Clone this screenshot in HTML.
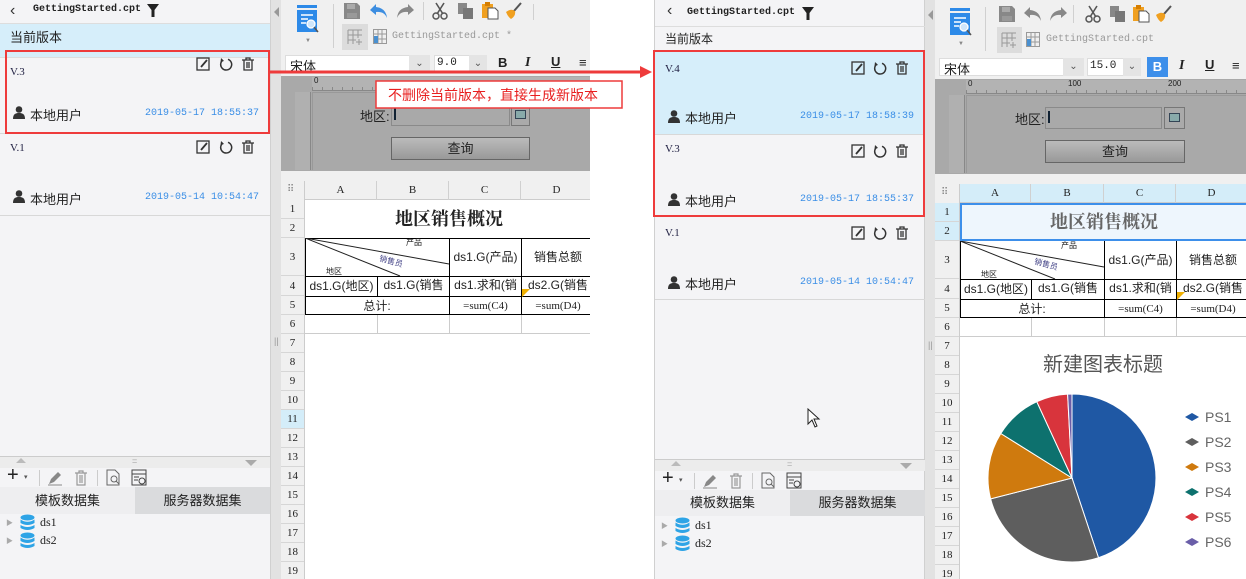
<!DOCTYPE html>
<html><head><meta charset="utf-8">
<style>
*{margin:0;padding:0;box-sizing:border-box}
body{width:1246px;height:579px;overflow:hidden;background:#fff;position:relative;font-family:"Liberation Sans","Noto Sans CJK SC",sans-serif;font-size:12px;color:#222;white-space:nowrap}
.a{position:absolute}
.mono{font-family:"Liberation Mono","Noto Sans CJK SC",monospace}
.serif{font-family:"Liberation Serif","Noto Serif CJK SC",serif}
.vp{position:absolute;top:0;width:271px;height:579px;background:#f4f4f6;border-right:1px solid #d0d0d0}
.item{position:absolute;left:0;width:270px;border-bottom:1px solid #d8d8d8}
.vt{position:absolute;left:10px;top:8px;font-family:"Liberation Serif",serif;font-size:11px;color:#224}
.usr{position:absolute;left:12px;font-size:13px;color:#222}
.dt{position:absolute;font-family:"Liberation Mono",monospace;font-size:10px;color:#3a8ee6;white-space:nowrap}
.ic{position:absolute;width:14px;height:14px}
.rn{position:absolute;width:100%;text-align:center;font-family:"Liberation Serif",serif;font-size:11px;color:#222;border-bottom:1px solid #d6d6d6}
.hc{position:absolute;top:0;height:19px;text-align:center;font-family:"Liberation Serif",serif;font-size:11px;line-height:19px;border-right:1px solid #d0d0d0}
.cell{position:absolute;text-align:center;white-space:nowrap;overflow:hidden;font-size:12px}
</style></head><body>

<!-- ============ LEFT VERSION PANEL ============ -->
<div class="vp" style="left:0">
  <div class="a" style="left:10px;top:2px;font-size:16px;color:#333">&#8249;</div>
  <div class="a mono" style="left:33px;top:4px;font-size:10px;font-weight:bold;color:#222">GettingStarted.cpt</div>
  <svg class="a" style="left:147px;top:4px" width="12" height="13"><path d="M0 0H12L7.5 6V13H4.5V6Z" fill="#222"/></svg>
  <div class="a" style="left:0;top:23px;width:270px;height:35px;background:#d6eefa;border-top:1px solid #ddd;border-bottom:1px solid #ddd"></div>
  <div class="a" style="left:10px;top:27px;font-size:13px">当前版本</div>

  <div class="item" style="top:58px;height:76px">
    <div class="vt">V.3</div>
    <svg class="ic" style="left:196px;top:-1px" viewBox="0 0 14 14"><rect x="1" y="1" width="12" height="12" fill="none" stroke="#333" stroke-width="1.3"/><path d="M5 10L11 3" stroke="#333" stroke-width="1.8"/></svg>
    <svg class="ic" style="left:219px;top:-1px" viewBox="0 0 14 14"><path d="M4 3A5.5 5.5 0 1 0 9 2.3" fill="none" stroke="#333" stroke-width="1.5"/><path d="M2 1L5 4L1.5 5Z" fill="#333"/></svg>
    <svg class="ic" style="left:241px;top:-1px" viewBox="0 0 14 14"><path d="M1 3H13M5 3V1H9V3M3 3V13H11V3M6 5V11M8 5V11" fill="none" stroke="#333" stroke-width="1.3"/></svg>
    <svg class="a" style="left:13px;top:48px" width="12" height="13"><circle cx="6" cy="3.5" r="3.3" fill="#333"/><path d="M0 13C0 8 2.5 7 6 7S12 8 12 13Z" fill="#333"/></svg>
    <div class="usr" style="top:47px;left:30px">本地用户</div>
    <div class="dt" style="left:145px;top:50px">2019-05-17 18:55:37</div>
  </div>
  <div class="item" style="top:134px;height:82px">
    <div class="vt">V.1</div>
    <svg class="ic" style="left:196px;top:6px" viewBox="0 0 14 14"><rect x="1" y="1" width="12" height="12" fill="none" stroke="#333" stroke-width="1.3"/><path d="M5 10L11 3" stroke="#333" stroke-width="1.8"/></svg>
    <svg class="ic" style="left:219px;top:6px" viewBox="0 0 14 14"><path d="M4 3A5.5 5.5 0 1 0 9 2.3" fill="none" stroke="#333" stroke-width="1.5"/><path d="M2 1L5 4L1.5 5Z" fill="#333"/></svg>
    <svg class="ic" style="left:241px;top:6px" viewBox="0 0 14 14"><path d="M1 3H13M5 3V1H9V3M3 3V13H11V3M6 5V11M8 5V11" fill="none" stroke="#333" stroke-width="1.3"/></svg>
    <svg class="a" style="left:13px;top:56px" width="12" height="13"><circle cx="6" cy="3.5" r="3.3" fill="#333"/><path d="M0 13C0 8 2.5 7 6 7S12 8 12 13Z" fill="#333"/></svg>
    <div class="usr" style="top:55px;left:30px">本地用户</div>
    <div class="dt" style="left:145px;top:58px">2019-05-14 10:54:47</div>
  </div>
  <div class="a" style="left:0;top:456px;width:270px;height:12px;background:#ececec;border-top:1px solid #ccc"></div>
  <div class="a" style="left:16px;top:458px;border:5px solid transparent;border-bottom-color:#bbb;border-top:0"></div>
  <div class="a" style="left:245px;top:460px;border:6px solid transparent;border-top-color:#aaa;border-bottom:0"></div>
  <div class="a" style="left:132px;top:456px;font-size:9px;color:#aaa">=</div>
  <div class="a" style="left:0;top:468px;width:270px;height:20px;background:#f4f4f6"></div>
  <div class="a" style="left:7px;top:464px;font-size:20px;color:#222">+</div><div class="a" style="left:24px;top:473px;font-size:7px;color:#555">▾</div>
  <div class="a" style="left:39px;top:470px;width:1px;height:16px;background:#ccc"></div>
  <svg class="a" style="left:47px;top:470px" width="16" height="16"><path d="M2 14L4 9L11 2L14 5L7 12Z" fill="#888"/><path d="M1 15H15" stroke="#888"/></svg>
  <svg class="a" style="left:74px;top:470px" width="14" height="16"><path d="M1 3H13M5 3V1H9V3M3 3V15H11V3M6 5V13M8 5V13" fill="none" stroke="#999" stroke-width="1.2"/></svg>
  <div class="a" style="left:97px;top:470px;width:1px;height:16px;background:#ccc"></div>
  <svg class="a" style="left:106px;top:469px" width="14" height="17"><path d="M1 1H9L13 5V16H1Z" fill="none" stroke="#666"/><circle cx="8" cy="10" r="3" fill="none" stroke="#666"/><path d="M10 12L13 15" stroke="#666"/></svg>
  <svg class="a" style="left:131px;top:469px" width="16" height="17"><rect x="1" y="1" width="14" height="15" fill="none" stroke="#444"/><path d="M1 5H15M3 8H8M3 11H7" stroke="#444"/><circle cx="11" cy="12" r="3" fill="none" stroke="#444"/></svg>
  <div class="a" style="left:0;top:487px;width:135px;height:27px;background:#eeeef0;text-align:center;line-height:27px;font-size:13px">模板数据集</div>
  <div class="a" style="left:135px;top:487px;width:135px;height:27px;background:#dadbdd;text-align:center;line-height:27px;font-size:13px">服务器数据集</div>
  <div class="a" style="left:6px;top:518px;font-size:7px;color:#aaa">▶</div>
  <div class="a" style="left:6px;top:536px;font-size:7px;color:#aaa">▶</div>
  <svg class="a" style="left:20px;top:514px" width="15" height="17"><ellipse cx="7.5" cy="3.5" rx="7" ry="3" fill="#2ea4e6"/><path d="M0.5 5.5Q7.5 10 14.5 5.5V9Q7.5 13 0.5 9Z M0.5 11Q7.5 15 14.5 11V14Q7.5 18 0.5 14Z" fill="#2ea4e6"/></svg>
  <svg class="a" style="left:20px;top:532px" width="15" height="17"><ellipse cx="7.5" cy="3.5" rx="7" ry="3" fill="#2ea4e6"/><path d="M0.5 5.5Q7.5 10 14.5 5.5V9Q7.5 13 0.5 9Z M0.5 11Q7.5 15 14.5 11V14Q7.5 18 0.5 14Z" fill="#2ea4e6"/></svg>
  <div class="a serif" style="left:40px;top:515px;font-size:12px">ds1</div>
  <div class="a serif" style="left:40px;top:533px;font-size:12px">ds2</div>
</div>

<!-- ============ LEFT DESIGNER ============ -->
<div class="a" style="left:271px;top:0;width:319px;height:579px;background:#f0f0f0;overflow:hidden">
  <div class="a" style="left:0;top:0;width:10px;height:579px;background:#e2e2e2"></div>
  <div class="a" style="left:3px;top:7px;border:5px solid transparent;border-right-color:#999;border-left:0;height:0"></div>
  <div class="a" style="left:3px;top:336px;font-size:9px;color:#999">||</div>
  <svg class="a" style="left:25px;top:5px" width="24" height="30"><rect x="1" y="0" width="20" height="3" fill="#2d8ae8"/><path d="M1 5H21V27H1Z" fill="#2d8ae8"/><path d="M5 10H17M5 14H12M5 18H10" stroke="#fff" stroke-width="1.5"/><circle cx="15" cy="19" r="4" fill="#cfe6fb" stroke="#fff" stroke-width="1.3"/><path d="M18 22L22 27" stroke="#555" stroke-width="1.5"/></svg>
  <div class="a" style="left:34px;top:38px;font-size:6px;color:#888">▼</div>
  <div class="a" style="left:62px;top:4px;width:1px;height:44px;background:#d0d0d0"></div>
  <svg class="a" style="left:72px;top:2px" width="18" height="18"><path d="M1 1H14L17 4V17H1Z" fill="#888"/><rect x="4" y="2" width="8" height="5" fill="#aaa"/><rect x="4" y="11" width="10" height="5" fill="#999"/></svg>
  <svg class="a" style="left:98px;top:3px" width="20" height="16"><path d="M7 1L1 7L7 12V9Q15 8 18 15Q17 5 7 4Z" fill="#3c8de0"/></svg>
  <svg class="a" style="left:124px;top:3px" width="20" height="16"><path d="M13 1L19 7L13 12V9Q5 8 2 15Q3 5 13 4Z" fill="#888"/></svg>
  <div class="a" style="left:152px;top:2px;width:1px;height:18px;background:#d0d0d0"></div>
  <svg class="a" style="left:160px;top:2px" width="18" height="18"><path d="M5 1L12 12M13 1L6 12" stroke="#555" stroke-width="1.6"/><circle cx="5" cy="14" r="3" fill="none" stroke="#555" stroke-width="1.5"/><circle cx="13" cy="14" r="3" fill="none" stroke="#555" stroke-width="1.5"/></svg>
  <svg class="a" style="left:186px;top:2px" width="18" height="18"><rect x="1" y="1" width="9" height="11" fill="#888"/><rect x="6" y="6" width="10" height="11" fill="#777"/></svg>
  <svg class="a" style="left:210px;top:1px" width="18" height="19"><rect x="1" y="3" width="11" height="14" fill="#f0a020"/><rect x="4" y="1" width="5" height="4" fill="#d67e00"/><path d="M7 7H14L17 10V18H7Z" fill="#fff" stroke="#555"/></svg>
  <svg class="a" style="left:234px;top:2px" width="18" height="18"><path d="M16 1L9 9" stroke="#555" stroke-width="2"/><path d="M1 10Q6 6 10 9Q11 14 6 17Q3 15 1 10Z" fill="#f0a020"/></svg>
  <div class="a" style="left:262px;top:4px;width:1px;height:16px;background:#d0d0d0"></div>
  <div class="a" style="left:71px;top:24px;width:26px;height:26px;background:#dcdcdc"></div>
  <svg class="a" style="left:76px;top:29px" width="16" height="16"><path d="M1 1H15M1 6H15M1 11H9M1 1V15M6 1V15M11 1V9" stroke="#999" fill="none"/><path d="M12 10V16M9 13H15" stroke="#999"/></svg>
  <svg class="a" style="left:102px;top:29px" width="14" height="16"><rect x="0.5" y="0.5" width="13" height="14" fill="none" stroke="#999"/><path d="M0 5H14M0 10H14M5 0V15M9 0V15" stroke="#999"/><rect x="1" y="7" width="4" height="7" fill="#4a90d0"/></svg>
  <div class="a mono" style="left:121px;top:31px;font-size:10px;color:#999">GettingStarted.cpt *</div>
  <div class="a" style="left:14px;top:55px;width:145px;height:18px;background:#fff;border:1px solid #ddd"></div>
  <div class="a" style="left:19px;top:56px;font-size:13px">宋体</div>
  <div class="a" style="left:138px;top:55px;width:21px;height:18px;background:#e4e4e4;text-align:center;font-size:10px;color:#555;line-height:18px">&#8964;</div>
  <div class="a" style="left:163px;top:55px;width:53px;height:18px;background:#fff;border:1px solid #ddd"></div>
  <div class="a mono" style="left:166px;top:57px;font-size:11px">9.0</div>
  <div class="a" style="left:198px;top:55px;width:18px;height:18px;background:#e4e4e4;text-align:center;font-size:10px;color:#555;line-height:18px">&#8964;</div>
  <div class="a" style="left:227px;top:55px;font-size:13px;font-weight:bold">B</div>
  <div class="a serif" style="left:254px;top:55px;font-size:14px;font-style:italic;font-weight:bold">I</div>
  <div class="a" style="left:280px;top:54px;font-size:13px;font-weight:bold;text-decoration:underline">U</div>
  <div class="a" style="left:308px;top:55px;font-size:13px">&#8801;</div>
  <div class="a" style="left:10px;top:76px;width:309px;height:95px;background:#a9a9a9"></div>
  <div class="a" style="left:41px;top:77px;width:278px;height:14px;background:#b3b3b3;border-bottom:1px solid #888;background-image:repeating-linear-gradient(90deg,#888 0 1px,transparent 1px 10px);background-size:100% 4px;background-repeat:no-repeat;background-position:0 10px"></div>
  <div class="a" style="left:43px;top:76px;font-size:8px">0</div>
  <div class="a" style="left:24px;top:92px;width:16px;height:78px;background:#b0b0b0;border-right:1px solid #888"></div>
  <div class="a" style="left:41px;top:92px;width:278px;height:78px;border-left:1px solid #999;border-top:1px solid #999"></div>
  <div class="a" style="left:89px;top:106px;font-size:13px">地区:</div>
  <div class="a" style="left:120px;top:104px;width:119px;height:22px;border:1px solid #8a8a8a"></div>
  <div class="a" style="left:123px;top:108px;width:2px;height:12px;background:#123"></div>
  <div class="a" style="left:240px;top:104px;width:19px;height:22px;border:1px solid #777;background:#aaa"></div>
  <div class="a" style="left:244px;top:110px;width:11px;height:9px;border:1px solid #345;background:#8aa"></div>
  <div class="a" style="left:120px;top:137px;width:139px;height:23px;border:1px solid #666;background:linear-gradient(#bbb,#999);text-align:center;line-height:21px;font-size:13px">查询</div>
  <div class="a" style="left:10px;top:181px;width:309px;height:398px;background:#fff"></div>
  <div class="a" style="left:10px;top:181px;width:24px;height:398px;background:#f0f0f0;border-right:1px solid #ccc">
    <div class="a" style="left:6px;top:3px;font-size:10px;color:#888;letter-spacing:-1px">⠿</div>
    <div class="rn" style="top:19px;height:19px;line-height:19px">1</div>
    <div class="rn" style="top:38px;height:19px;line-height:19px">2</div>
    <div class="rn" style="top:57px;height:38px;line-height:38px">3</div>
    <div class="rn" style="top:95px;height:20px;line-height:20px">4</div>
    <div class="rn" style="top:115px;height:19px;line-height:19px">5</div>
    <div class="rn" style="top:134px;height:19px;line-height:19px">6</div>
    <div class="rn" style="top:153px;height:19px;line-height:19px">7</div>
    <div class="rn" style="top:172px;height:19px;line-height:19px">8</div>
    <div class="rn" style="top:191px;height:19px;line-height:19px">9</div>
    <div class="rn" style="top:210px;height:19px;line-height:19px">10</div>
    <div class="rn" style="top:229px;height:19px;line-height:19px;background:#d4edf9">11</div>
    <div class="rn" style="top:248px;height:19px;line-height:19px">12</div>
    <div class="rn" style="top:267px;height:19px;line-height:19px">13</div>
    <div class="rn" style="top:286px;height:19px;line-height:19px">14</div>
    <div class="rn" style="top:305px;height:19px;line-height:19px">15</div>
    <div class="rn" style="top:324px;height:19px;line-height:19px">16</div>
    <div class="rn" style="top:343px;height:19px;line-height:19px">17</div>
    <div class="rn" style="top:362px;height:19px;line-height:19px">18</div>
    <div class="rn" style="top:381px;height:19px;line-height:19px">19</div>
  </div>
  <div class="a" style="left:34px;top:181px;width:285px;height:19px;background:#f0f0f0;border-bottom:1px solid #ccc">
    <div class="hc" style="left:0;width:72px">A</div>
    <div class="hc" style="left:72px;width:72px">B</div>
    <div class="hc" style="left:144px;width:72px">C</div>
    <div class="hc" style="left:216px;width:72px">D</div>
  </div>
  <div class="a" style="left:34px;top:200px;width:285px;height:134px">
    <div class="cell serif" style="left:0;top:0;width:288px;height:38px;line-height:38px;font-size:18px;font-weight:bold">地区销售概况</div>
    <div class="a" style="left:0;top:38px;width:290px;height:77px;border-top:1.5px solid #000;border-left:1.5px solid #000;border-bottom:1.5px solid #000"></div>
    <div class="a" style="left:0;top:76px;width:290px;height:1px;background:#000"></div>
    <div class="a" style="left:144px;top:38px;width:1px;height:77px;background:#000"></div>
    <div class="a" style="left:216px;top:38px;width:1px;height:77px;background:#000"></div>
    <div class="a" style="left:72px;top:76px;width:1px;height:20px;background:#000"></div>
    <div class="a" style="left:0;top:96px;width:290px;height:1px;background:#000"></div>
    <svg class="a" style="left:0;top:38px" width="145" height="38"><path d="M0 0L144 26M0 0L95 38" stroke="#222" stroke-width="1"/></svg>
    <div class="a" style="left:101px;top:37px;font-size:8px">产品</div>
    <div class="a" style="left:74px;top:56px;font-size:8px;color:#448;transform:rotate(15deg)">销售员</div>
    <div class="a" style="left:21px;top:66px;font-size:8px">地区</div>
    <div class="cell" style="left:145px;top:38px;width:71px;height:38px;line-height:38px">ds1.G(产品)</div>
    <div class="cell" style="left:217px;top:38px;width:72px;height:38px;line-height:38px">销售总额</div>
    <div class="cell" style="left:1px;top:77px;width:71px;height:19px;line-height:19px">ds1.G(地区)</div>
    <div class="cell" style="left:73px;top:77px;width:71px;height:19px;line-height:17px">ds1.G(销售</div>
    <div class="cell" style="left:145px;top:77px;width:71px;height:19px;line-height:17px">ds1.求和(销</div>
    <div class="cell" style="left:217px;top:77px;width:72px;height:19px;line-height:17px">ds2.G(销售</div>
    <div class="a" style="left:217px;top:89px;border:4px solid transparent;border-left-color:#f0b000;border-top-color:#f0b000;width:0"></div>
    <div class="cell" style="left:0;top:97px;width:144px;height:18px;line-height:18px">总计:</div>
    <div class="cell serif" style="left:145px;top:97px;width:71px;height:18px;line-height:18px;font-size:11px">=sum(C4)</div>
    <div class="cell serif" style="left:217px;top:97px;width:72px;height:18px;line-height:18px;font-size:11px">=sum(D4)</div>
    <div class="a" style="left:0;top:133px;width:290px;height:1px;background:#ccc"></div>
    <div class="a" style="left:72px;top:115px;width:1px;height:19px;background:#ccc"></div>
    <div class="a" style="left:144px;top:115px;width:1px;height:19px;background:#ccc"></div>
    <div class="a" style="left:216px;top:115px;width:1px;height:19px;background:#ccc"></div>
  </div>
</div>

<!-- ============ RIGHT VERSION PANEL ============ -->
<div class="vp" style="left:654px;border-left:1px solid #d0d0d0">
  <div class="a" style="left:12px;top:2px;font-size:16px;color:#333">&#8249;</div>
  <div class="a mono" style="left:32px;top:7px;font-size:10px;font-weight:bold;color:#222">GettingStarted.cpt</div>
  <svg class="a" style="left:147px;top:7px" width="12" height="13"><path d="M0 0H12L7.5 6V13H4.5V6Z" fill="#222"/></svg>
  <div class="a" style="left:0;top:26px;width:270px;height:25px;border-top:1px solid #ddd;border-bottom:1px solid #ddd"></div>
  <div class="a" style="left:10px;top:30px;font-size:12px">当前版本</div>
  <div class="item" style="top:51px;height:84px;background:#d6eefa">
    <div class="vt" style="top:12px">V.4</div>
    <svg class="ic" style="left:196px;top:10px" viewBox="0 0 14 14"><rect x="1" y="1" width="12" height="12" fill="none" stroke="#333" stroke-width="1.3"/><path d="M5 10L11 3" stroke="#333" stroke-width="1.8"/></svg>
    <svg class="ic" style="left:218px;top:10px" viewBox="0 0 14 14"><path d="M4 3A5.5 5.5 0 1 0 9 2.3" fill="none" stroke="#333" stroke-width="1.5"/><path d="M2 1L5 4L1.5 5Z" fill="#333"/></svg>
    <svg class="ic" style="left:240px;top:10px" viewBox="0 0 14 14"><path d="M1 3H13M5 3V1H9V3M3 3V13H11V3M6 5V11M8 5V11" fill="none" stroke="#333" stroke-width="1.3"/></svg>
    <svg class="a" style="left:13px;top:59px" width="12" height="13"><circle cx="6" cy="3.5" r="3.3" fill="#333"/><path d="M0 13C0 8 2.5 7 6 7S12 8 12 13Z" fill="#333"/></svg>
    <div class="usr" style="top:57px;left:30px">本地用户</div>
    <div class="dt" style="left:145px;top:60px">2019-05-17 18:58:39</div>
  </div>
  <div class="item" style="top:135px;height:82px">
    <div class="vt">V.3</div>
    <svg class="ic" style="left:196px;top:9px" viewBox="0 0 14 14"><rect x="1" y="1" width="12" height="12" fill="none" stroke="#333" stroke-width="1.3"/><path d="M5 10L11 3" stroke="#333" stroke-width="1.8"/></svg>
    <svg class="ic" style="left:218px;top:9px" viewBox="0 0 14 14"><path d="M4 3A5.5 5.5 0 1 0 9 2.3" fill="none" stroke="#333" stroke-width="1.5"/><path d="M2 1L5 4L1.5 5Z" fill="#333"/></svg>
    <svg class="ic" style="left:240px;top:9px" viewBox="0 0 14 14"><path d="M1 3H13M5 3V1H9V3M3 3V13H11V3M6 5V11M8 5V11" fill="none" stroke="#333" stroke-width="1.3"/></svg>
    <svg class="a" style="left:13px;top:58px" width="12" height="13"><circle cx="6" cy="3.5" r="3.3" fill="#333"/><path d="M0 13C0 8 2.5 7 6 7S12 8 12 13Z" fill="#333"/></svg>
    <div class="usr" style="top:56px;left:30px">本地用户</div>
    <div class="dt" style="left:145px;top:59px">2019-05-17 18:55:37</div>
  </div>
  <div class="item" style="top:217px;height:83px">
    <div class="vt" style="top:10px">V.1</div>
    <svg class="ic" style="left:196px;top:9px" viewBox="0 0 14 14"><rect x="1" y="1" width="12" height="12" fill="none" stroke="#333" stroke-width="1.3"/><path d="M5 10L11 3" stroke="#333" stroke-width="1.8"/></svg>
    <svg class="ic" style="left:218px;top:9px" viewBox="0 0 14 14"><path d="M4 3A5.5 5.5 0 1 0 9 2.3" fill="none" stroke="#333" stroke-width="1.5"/><path d="M2 1L5 4L1.5 5Z" fill="#333"/></svg>
    <svg class="ic" style="left:240px;top:9px" viewBox="0 0 14 14"><path d="M1 3H13M5 3V1H9V3M3 3V13H11V3M6 5V11M8 5V11" fill="none" stroke="#333" stroke-width="1.3"/></svg>
    <svg class="a" style="left:13px;top:59px" width="12" height="13"><circle cx="6" cy="3.5" r="3.3" fill="#333"/><path d="M0 13C0 8 2.5 7 6 7S12 8 12 13Z" fill="#333"/></svg>
    <div class="usr" style="top:57px;left:30px">本地用户</div>
    <div class="dt" style="left:145px;top:60px">2019-05-14 10:54:47</div>
  </div>
  <svg class="a" style="left:152px;top:408px" width="14" height="20"><path d="M1 1V16L5 12L8 19L10 18L7 11H12Z" fill="#fff" stroke="#222"/></svg>
  <div class="a" style="left:0;top:459px;width:270px;height:12px;background:#ececec;border-top:1px solid #ccc"></div>
  <div class="a" style="left:16px;top:461px;border:5px solid transparent;border-bottom-color:#bbb;border-top:0"></div>
  <div class="a" style="left:245px;top:463px;border:6px solid transparent;border-top-color:#aaa;border-bottom:0"></div>
  <div class="a" style="left:132px;top:459px;font-size:9px;color:#aaa">=</div>
  <div class="a" style="left:7px;top:467px;font-size:20px;color:#222">+</div><div class="a" style="left:24px;top:476px;font-size:7px;color:#555">▾</div>
  <div class="a" style="left:39px;top:473px;width:1px;height:16px;background:#ccc"></div>
  <svg class="a" style="left:47px;top:473px" width="16" height="16"><path d="M2 14L4 9L11 2L14 5L7 12Z" fill="#888"/><path d="M1 15H15" stroke="#888"/></svg>
  <svg class="a" style="left:74px;top:473px" width="14" height="16"><path d="M1 3H13M5 3V1H9V3M3 3V15H11V3M6 5V13M8 5V13" fill="none" stroke="#999" stroke-width="1.2"/></svg>
  <div class="a" style="left:97px;top:473px;width:1px;height:16px;background:#ccc"></div>
  <svg class="a" style="left:106px;top:472px" width="14" height="17"><path d="M1 1H9L13 5V16H1Z" fill="none" stroke="#666"/><circle cx="8" cy="10" r="3" fill="none" stroke="#666"/><path d="M10 12L13 15" stroke="#666"/></svg>
  <svg class="a" style="left:131px;top:472px" width="16" height="17"><rect x="1" y="1" width="14" height="15" fill="none" stroke="#444"/><path d="M1 5H15M3 8H8M3 11H7" stroke="#444"/><circle cx="11" cy="12" r="3" fill="none" stroke="#444"/></svg>
  <div class="a" style="left:0;top:490px;width:135px;height:26px;background:#eeeef0;text-align:center;line-height:26px;font-size:13px">模板数据集</div>
  <div class="a" style="left:135px;top:490px;width:135px;height:26px;background:#dadbdd;text-align:center;line-height:26px;font-size:13px">服务器数据集</div>
  <div class="a" style="left:6px;top:521px;font-size:7px;color:#aaa">▶</div>
  <div class="a" style="left:6px;top:539px;font-size:7px;color:#aaa">▶</div>
  <svg class="a" style="left:20px;top:517px" width="15" height="17"><ellipse cx="7.5" cy="3.5" rx="7" ry="3" fill="#2ea4e6"/><path d="M0.5 5.5Q7.5 10 14.5 5.5V9Q7.5 13 0.5 9Z M0.5 11Q7.5 15 14.5 11V14Q7.5 18 0.5 14Z" fill="#2ea4e6"/></svg>
  <svg class="a" style="left:20px;top:535px" width="15" height="17"><ellipse cx="7.5" cy="3.5" rx="7" ry="3" fill="#2ea4e6"/><path d="M0.5 5.5Q7.5 10 14.5 5.5V9Q7.5 13 0.5 9Z M0.5 11Q7.5 15 14.5 11V14Q7.5 18 0.5 14Z" fill="#2ea4e6"/></svg>
  <div class="a serif" style="left:40px;top:518px;font-size:12px">ds1</div>
  <div class="a serif" style="left:40px;top:536px;font-size:12px">ds2</div>
</div>

<!-- ============ RIGHT DESIGNER ============ -->
<div class="a" style="left:925px;top:0;width:321px;height:579px;background:#f0f0f0;overflow:hidden">
  <div class="a" style="left:0;top:0;width:10px;height:579px;background:#e2e2e2"></div>
  <div class="a" style="left:3px;top:10px;border:5px solid transparent;border-right-color:#999;border-left:0;height:0"></div>
  <div class="a" style="left:3px;top:340px;font-size:9px;color:#999">||</div>
  <svg class="a" style="left:24px;top:8px" width="24" height="30"><rect x="1" y="0" width="20" height="3" fill="#2d8ae8"/><path d="M1 5H21V27H1Z" fill="#2d8ae8"/><path d="M5 10H17M5 14H12M5 18H10" stroke="#fff" stroke-width="1.5"/><circle cx="15" cy="19" r="4" fill="#cfe6fb" stroke="#fff" stroke-width="1.3"/><path d="M18 22L22 27" stroke="#555" stroke-width="1.5"/></svg>
  <div class="a" style="left:33px;top:41px;font-size:6px;color:#888">▼</div>
  <div class="a" style="left:60px;top:7px;width:1px;height:44px;background:#d0d0d0"></div>
  <svg class="a" style="left:73px;top:5px" width="18" height="18"><path d="M1 1H14L17 4V17H1Z" fill="#888"/><rect x="4" y="2" width="8" height="5" fill="#aaa"/><rect x="4" y="11" width="10" height="5" fill="#999"/></svg>
  <svg class="a" style="left:98px;top:6px" width="20" height="16"><path d="M7 1L1 7L7 12V9Q15 8 18 15Q17 5 7 4Z" fill="#888"/></svg>
  <svg class="a" style="left:123px;top:6px" width="20" height="16"><path d="M13 1L19 7L13 12V9Q5 8 2 15Q3 5 13 4Z" fill="#888"/></svg>
  <div class="a" style="left:148px;top:5px;width:1px;height:18px;background:#d0d0d0"></div>
  <svg class="a" style="left:159px;top:5px" width="18" height="18"><path d="M5 1L12 12M13 1L6 12" stroke="#555" stroke-width="1.6"/><circle cx="5" cy="14" r="3" fill="none" stroke="#555" stroke-width="1.5"/><circle cx="13" cy="14" r="3" fill="none" stroke="#555" stroke-width="1.5"/></svg>
  <svg class="a" style="left:184px;top:5px" width="18" height="18"><rect x="1" y="1" width="9" height="11" fill="#888"/><rect x="6" y="6" width="10" height="11" fill="#777"/></svg>
  <svg class="a" style="left:207px;top:4px" width="18" height="19"><rect x="1" y="3" width="11" height="14" fill="#f0a020"/><rect x="4" y="1" width="5" height="4" fill="#d67e00"/><path d="M7 7H14L17 10V18H7Z" fill="#fff" stroke="#555"/></svg>
  <svg class="a" style="left:230px;top:5px" width="18" height="18"><path d="M16 1L9 9" stroke="#555" stroke-width="2"/><path d="M1 10Q6 6 10 9Q11 14 6 17Q3 15 1 10Z" fill="#f0a020"/></svg>
  <div class="a" style="left:72px;top:27px;width:25px;height:26px;background:#dcdcdc"></div>
  <svg class="a" style="left:76px;top:32px" width="16" height="16"><path d="M1 1H15M1 6H15M1 11H9M1 1V15M6 1V15M11 1V9" stroke="#999" fill="none"/><path d="M12 10V16M9 13H15" stroke="#999"/></svg>
  <svg class="a" style="left:101px;top:32px" width="14" height="16"><rect x="0.5" y="0.5" width="13" height="14" fill="none" stroke="#999"/><path d="M0 5H14M0 10H14M5 0V15M9 0V15" stroke="#999"/><rect x="1" y="7" width="4" height="7" fill="#4a90d0"/></svg>
  <div class="a mono" style="left:121px;top:34px;font-size:10px;color:#999">GettingStarted.cpt</div>
  <div class="a" style="left:14px;top:58px;width:145px;height:18px;background:#fff;border:1px solid #ddd"></div>
  <div class="a" style="left:19px;top:59px;font-size:13px">宋体</div>
  <div class="a" style="left:138px;top:58px;width:21px;height:18px;background:#e4e4e4;text-align:center;font-size:10px;color:#555;line-height:18px">&#8964;</div>
  <div class="a" style="left:162px;top:58px;width:54px;height:18px;background:#fff;border:1px solid #ddd"></div>
  <div class="a mono" style="left:165px;top:60px;font-size:11px">15.0</div>
  <div class="a" style="left:198px;top:58px;width:18px;height:18px;background:#e4e4e4;text-align:center;font-size:10px;color:#555;line-height:18px">&#8964;</div>
  <div class="a" style="left:222px;top:57px;width:21px;height:20px;background:#3d8fea;color:#fff;text-align:center;line-height:20px;font-size:13px;font-weight:bold">B</div>
  <div class="a serif" style="left:254px;top:58px;font-size:14px;font-style:italic;font-weight:bold">I</div>
  <div class="a" style="left:280px;top:57px;font-size:13px;font-weight:bold;text-decoration:underline">U</div>
  <div class="a" style="left:307px;top:58px;font-size:13px">&#8801;</div>
  <div class="a" style="left:10px;top:79px;width:311px;height:95px;background:#a9a9a9"></div>
  <div class="a" style="left:41px;top:80px;width:280px;height:14px;background:#b3b3b3;border-bottom:1px solid #888;background-image:repeating-linear-gradient(90deg,#888 0 1px,transparent 1px 10px);background-size:100% 4px;background-repeat:no-repeat;background-position:0 10px"></div>
  <div class="a" style="left:43px;top:79px;font-size:8px">0</div>
  <div class="a" style="left:143px;top:79px;font-size:8px">100</div>
  <div class="a" style="left:243px;top:79px;font-size:8px">200</div>
  <div class="a" style="left:24px;top:95px;width:16px;height:78px;background:#b0b0b0;border-right:1px solid #888"></div>
  <div class="a" style="left:41px;top:95px;width:280px;height:78px;border-left:1px solid #999;border-top:1px solid #999"></div>
  <div class="a" style="left:90px;top:109px;font-size:13px">地区:</div>
  <div class="a" style="left:120px;top:107px;width:117px;height:22px;border:1px solid #8a8a8a"></div>
  <div class="a" style="left:123px;top:111px;width:2px;height:12px;background:#123"></div>
  <div class="a" style="left:239px;top:107px;width:21px;height:22px;border:1px solid #777;background:#aaa"></div>
  <div class="a" style="left:244px;top:113px;width:11px;height:9px;border:1px solid #345;background:#8aa"></div>
  <div class="a" style="left:120px;top:140px;width:140px;height:23px;border:1px solid #666;background:linear-gradient(#bbb,#999);text-align:center;line-height:21px;font-size:13px">查询</div>
  <div class="a" style="left:10px;top:184px;width:311px;height:395px;background:#fff"></div>
  <div class="a" style="left:10px;top:184px;width:25px;height:395px;background:#f0f0f0;border-right:1px solid #ccc">
    <div class="a" style="left:6px;top:3px;font-size:10px;color:#888">⠿</div>
    <div class="rn" style="top:19px;height:19px;line-height:19px;background:#d4edf9">1</div>
    <div class="rn" style="top:38px;height:19px;line-height:19px;background:#d4edf9">2</div>
    <div class="rn" style="top:57px;height:38px;line-height:38px">3</div>
    <div class="rn" style="top:95px;height:20px;line-height:20px">4</div>
    <div class="rn" style="top:115px;height:19px;line-height:19px">5</div>
    <div class="rn" style="top:134px;height:19px;line-height:19px">6</div>
    <div class="rn" style="top:153px;height:19px;line-height:19px">7</div>
    <div class="rn" style="top:172px;height:19px;line-height:19px">8</div>
    <div class="rn" style="top:191px;height:19px;line-height:19px">9</div>
    <div class="rn" style="top:210px;height:19px;line-height:19px">10</div>
    <div class="rn" style="top:229px;height:19px;line-height:19px">11</div>
    <div class="rn" style="top:248px;height:19px;line-height:19px">12</div>
    <div class="rn" style="top:267px;height:19px;line-height:19px">13</div>
    <div class="rn" style="top:286px;height:19px;line-height:19px">14</div>
    <div class="rn" style="top:305px;height:19px;line-height:19px">15</div>
    <div class="rn" style="top:324px;height:19px;line-height:19px">16</div>
    <div class="rn" style="top:343px;height:19px;line-height:19px">17</div>
    <div class="rn" style="top:362px;height:19px;line-height:19px">18</div>
    <div class="rn" style="top:381px;height:19px;line-height:19px">19</div>
  </div>
  <div class="a" style="left:35px;top:184px;width:286px;height:19px;background:#d4edf9;border-bottom:1px solid #ccc">
    <div class="hc" style="left:0;width:71px">A</div>
    <div class="hc" style="left:71px;width:73px">B</div>
    <div class="hc" style="left:144px;width:72px">C</div>
    <div class="hc" style="left:216px;width:72px">D</div>
  </div>
  <div class="a" style="left:35px;top:203px;width:286px;height:134px">
    <div class="a" style="left:0;top:0;width:292px;height:38px;background:#eef6fd;border:2px solid #3d8fea"></div>
    <div class="cell serif" style="left:0;top:0;width:288px;height:38px;line-height:38px;font-size:18px;font-weight:bold;color:#666">地区销售概况</div>
    <div class="a" style="left:0;top:38px;width:292px;height:77px;border-left:1.5px solid #000;border-bottom:1.5px solid #000"></div>
    <div class="a" style="left:0;top:76px;width:292px;height:1px;background:#000"></div>
    <div class="a" style="left:144px;top:38px;width:1px;height:77px;background:#000"></div>
    <div class="a" style="left:216px;top:38px;width:1px;height:77px;background:#000"></div>
    <div class="a" style="left:71px;top:76px;width:1px;height:20px;background:#000"></div>
    <div class="a" style="left:0;top:96px;width:292px;height:1px;background:#000"></div>
    <svg class="a" style="left:0;top:38px" width="145" height="38"><path d="M0 0L144 26M0 0L95 38" stroke="#222" stroke-width="1"/></svg>
    <div class="a" style="left:101px;top:37px;font-size:8px">产品</div>
    <div class="a" style="left:74px;top:56px;font-size:8px;color:#448;transform:rotate(15deg)">销售员</div>
    <div class="a" style="left:21px;top:66px;font-size:8px">地区</div>
    <div class="cell" style="left:145px;top:38px;width:71px;height:38px;line-height:38px">ds1.G(产品)</div>
    <div class="cell" style="left:217px;top:38px;width:72px;height:38px;line-height:38px">销售总额</div>
    <div class="cell" style="left:1px;top:77px;width:70px;height:19px;line-height:19px">ds1.G(地区)</div>
    <div class="cell" style="left:72px;top:77px;width:72px;height:19px;line-height:17px">ds1.G(销售</div>
    <div class="cell" style="left:145px;top:77px;width:71px;height:19px;line-height:17px">ds1.求和(销</div>
    <div class="cell" style="left:217px;top:77px;width:72px;height:19px;line-height:17px">ds2.G(销售</div>
    <div class="a" style="left:217px;top:89px;border:4px solid transparent;border-left-color:#f0b000;border-top-color:#f0b000;width:0"></div>
    <div class="cell" style="left:0;top:97px;width:144px;height:18px;line-height:18px">总计:</div>
    <div class="cell serif" style="left:145px;top:97px;width:71px;height:18px;line-height:18px;font-size:11px">=sum(C4)</div>
    <div class="cell serif" style="left:217px;top:97px;width:72px;height:18px;line-height:18px;font-size:11px">=sum(D4)</div>
    <div class="a" style="left:0;top:133px;width:292px;height:1px;background:#ccc"></div>
    <div class="a" style="left:71px;top:115px;width:1px;height:19px;background:#ccc"></div>
    <div class="a" style="left:144px;top:115px;width:1px;height:19px;background:#ccc"></div>
    <div class="a" style="left:216px;top:115px;width:1px;height:19px;background:#ccc"></div>
  </div>
</div>

<svg class="a" style="left:0;top:0" width="1246" height="579">
  <text x="1103" y="371" text-anchor="middle" font-family="Liberation Sans, Noto Sans CJK SC, sans-serif" font-size="20" fill="#555">新建图表标题</text>
  <g stroke="#fff" stroke-width="1">
    <path d="M1072 478L1072 394A84 84 0 0 1 1098.5 557.7Z" fill="#1f58a4"/>
    <path d="M1072 478L1098.5 557.7A84 84 0 0 1 990.6 498.9Z" fill="#5e5e5e"/>
    <path d="M1072 478L990.6 498.9A84 84 0 0 1 1000.8 433.5Z" fill="#cf7a0e"/>
    <path d="M1072 478L1000.8 433.5A84 84 0 0 1 1036.8 401.7Z" fill="#0d716e"/>
    <path d="M1072 478L1036.8 401.7A84 84 0 0 1 1067.6 394.1Z" fill="#d8343c"/>
    <path d="M1072 478L1067.6 394.1A84 84 0 0 1 1072 394Z" fill="#6a5ea8"/>
  </g>
  <g font-family="Liberation Sans, sans-serif" font-size="14" fill="#666">
    <path d="M1185 417l7-4 7 4-7 4z" fill="#1f58a4"/><text x="1205" y="422">PS1</text>
    <path d="M1185 442l7-4 7 4-7 4z" fill="#5e5e5e"/><text x="1205" y="447">PS2</text>
    <path d="M1185 467l7-4 7 4-7 4z" fill="#cf7a0e"/><text x="1205" y="472">PS3</text>
    <path d="M1185 492l7-4 7 4-7 4z" fill="#0d716e"/><text x="1205" y="497">PS4</text>
    <path d="M1185 517l7-4 7 4-7 4z" fill="#d8343c"/><text x="1205" y="522">PS5</text>
    <path d="M1185 542l7-4 7 4-7 4z" fill="#6a5ea8"/><text x="1205" y="547">PS6</text>
  </g>
  <rect x="6" y="51" width="263" height="82" fill="none" stroke="#ee3b3b" stroke-width="2"/>
  <rect x="654" y="51" width="270" height="165" fill="none" stroke="#ee3b3b" stroke-width="2"/>
  <path d="M270 72H642" stroke="#ee3b3b" stroke-width="3"/>
  <path d="M640 66L652 72L640 78Z" fill="#ee3b3b"/>
  <rect x="376" y="81" width="246" height="27" fill="#fff" stroke="#ee3b3b" stroke-width="1.5"/>
  <text x="388" y="100" font-family="Liberation Sans, Noto Sans CJK SC, sans-serif" font-size="14" fill="#e82020">不删除当前版本，直接生成新版本</text>
</svg>
</body></html>
